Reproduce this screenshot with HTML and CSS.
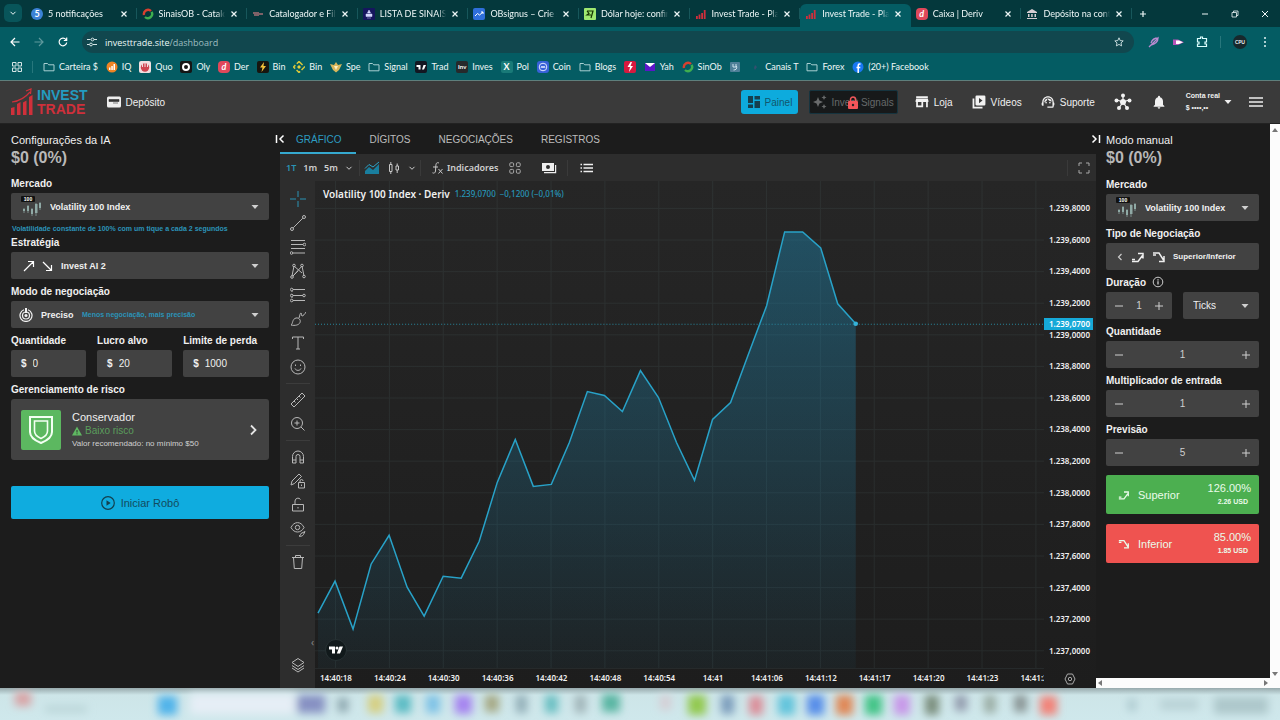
FILE: index.html
```html
<!DOCTYPE html>
<html lang="pt-BR">
<head>
<meta charset="utf-8">
<meta name="viewport" content="width=device-width, initial-scale=1">
<title>Invest Trade - Plataforma</title>
<link rel="stylesheet" href="styles.css">
</head>
<body>
<svg class="defs" aria-hidden="true">
  <symbol id="close" viewBox="0 0 8 8"><path d="M1.500 1.500l5 5m0-5l-5 5" fill="none" stroke="currentColor" stroke-width="1.200"/></symbol>
  <symbol id="folder" viewBox="0 0 12 12"><path d="M1 2.500h3.500l1.200 1.300h5.300v6h-10z" fill="none" stroke="#a9cfd2"/></symbol>
  <symbol id="bars" viewBox="0 0 12 12"><path d="M1 11V8h1.800v3zM3.600 11V6.500h1.800V11zM6.200 11V5H8v6zM8.800 11V2h1.800v9z" fill="#cf2f3c"/></symbol>
  <symbol id="caret" viewBox="0 0 8 8"><path d="M0.500 2h7L4 6z" fill="currentColor"/></symbol>
  <symbol id="chev" viewBox="0 0 8 8"><path d="M1.500 2.800L4 5.300l2.500-2.500" fill="none" stroke="currentColor"/></symbol>
  <symbol id="ring" viewBox="0 0 12 12"><g fill="none" stroke-width="2.400"><path d="M2 7a4.200 4.200 0 0 1 7-4" stroke="#d8402f"/><path d="M9.500 3.800A4.200 4.200 0 0 1 3 9" stroke="#3fae4f"/></g></symbol>
  <symbol id="minus" viewBox="0 0 10 10"><path d="M1 5h8" stroke="currentColor" fill="none"/></symbol>
  <symbol id="plus" viewBox="0 0 10 10"><path d="M1 5h8M5 1v8" stroke="currentColor" fill="none"/></symbol>
  <symbol id="up" viewBox="0 0 14 14"><path d="M1 11.500h6l4.500-6M1 9.500h3M7 3.500h5v5" fill="none" stroke="currentColor" stroke-width="1.500"/></symbol>
  <symbol id="down" viewBox="0 0 14 14"><path d="M1 3h6l4.500 7M1 5h3M12 6v5.500H7" fill="none" stroke="currentColor" stroke-width="1.500"/></symbol>
  <symbol id="market" viewBox="0 0 22 22">
    <rect width="14" height="6" rx="1" fill="#111"/>
    <path d="M3 12v5M7 9v8M11 12v8M15 7v13M19 6v8" stroke="#8ba19e" stroke-width="0.800"/>
    <path d="M2 13h2v2H2zM6 10h2v5H6zM10 13h2v5h-2zM14 8h2.500v9H14zM18 7h2v5h-2z" fill="#8fa9a5"/>
    <text x="7" y="5" text-anchor="middle" class="market-num">100</text>
  </symbol>
</svg>

<header class="browser">
  <div class="tabstrip">
    <button class="tab-search" aria-label="Pesquisar guias"><svg class="i8"><use href="#chev"/></svg></button>
    <nav class="tabs" aria-label="Guias">
      <div class="tab"><span class="fav round blue">5</span><span class="tab-title">5 notificações</span><button aria-label="Fechar"><svg class="i8"><use href="#close"/></svg></button></div>
      <div class="tab"><svg class="i12"><use href="#ring"/></svg><span class="tab-title">SinaisOB - Catalogador</span><button aria-label="Fechar"><svg class="i8"><use href="#close"/></svg></button></div>
      <div class="tab"><svg class="i12" viewBox="0 0 12 12"><path d="M1 5h4M2 7h3M6 4v4M7 6h4" stroke="#a76f75" stroke-width="1.500"/></svg><span class="tab-title">Catalogador e Filtro de</span><button aria-label="Fechar"><svg class="i8"><use href="#close"/></svg></button></div>
      <div class="tab"><svg class="i12" viewBox="0 0 12 12"><rect width="12" height="12" rx="1" fill="#15165e"/><path d="M3 6h6v2.500H3zM4 10h4M6 2l1.500 3h-3z" fill="#d5d8ff" stroke="#d5d8ff" stroke-width="0.500"/></svg><span class="tab-title">LISTA DE SINAIS FREE</span><button aria-label="Fechar"><svg class="i8"><use href="#close"/></svg></button></div>
      <div class="tab"><svg class="i12" viewBox="0 0 12 12"><rect width="12" height="12" rx="2" fill="#2f6fdb"/><path d="M2 8l2.500-2.500 2 1.500L10 4M8 4h2v2" fill="none" stroke="#fff"/></svg><span class="tab-title">OBsignus – Crie sinais</span><button aria-label="Fechar"><svg class="i8"><use href="#close"/></svg></button></div>
      <div class="tab"><svg class="i12" viewBox="0 0 12 12"><rect width="12" height="12" rx="1" fill="#9fe870"/><path d="M3 3h6L7 10M3 3l2 2.500L3 7h4" fill="none" stroke="#163300" stroke-width="1.200"/></svg><span class="tab-title">Dólar hoje: confira a</span><button aria-label="Fechar"><svg class="i8"><use href="#close"/></svg></button></div>
      <div class="tab"><svg class="i12"><use href="#bars"/></svg><span class="tab-title">Invest Trade - Plataforma</span><button aria-label="Fechar"><svg class="i8"><use href="#close"/></svg></button></div>
      <div class="tab active"><svg class="i12"><use href="#bars"/></svg><span class="tab-title">Invest Trade - Plataforma</span><button aria-label="Fechar"><svg class="i8"><use href="#close"/></svg></button></div>
      <div class="tab"><span class="fav deriv">d</span><span class="tab-title">Caixa | Deriv</span><button aria-label="Fechar"><svg class="i8"><use href="#close"/></svg></button></div>
      <div class="tab"><svg class="i12" viewBox="0 0 12 12"><path d="M1 4l5-3 5 3v1H1zM2 6h1.500v3H2zM5.200 6h1.500v3H5.200zM8.500 6H10v3H8.500zM1 10h10v1H1z" fill="#d6cdd2"/></svg><span class="tab-title">Depósito na conta real</span><button aria-label="Fechar"><svg class="i8"><use href="#close"/></svg></button></div>
    </nav>
    <div class="window">
      <button aria-label="Nova guia"><svg class="i8" viewBox="0 0 8 8"><path d="M1 4h6M4 1v6" stroke="currentColor" stroke-width="1.200"/></svg></button>
      <span class="window-controls">
        <button aria-label="Minimizar"><svg class="i8" viewBox="0 0 8 8"><path d="M1 4h6" stroke="currentColor"/></svg></button>
        <button aria-label="Restaurar"><svg class="i8" viewBox="0 0 8 8"><path d="M1 2.500h4.500V7H1zM2.500 2.500V1H7v4.500H5.500" fill="none" stroke="currentColor" stroke-width="0.800"/></svg></button>
        <button aria-label="Fechar janela"><svg class="i8" viewBox="0 0 8 8"><path d="M1 1l6 6m0-6L1 7" stroke="currentColor"/></svg></button>
      </span>
    </div>
  </div>

  <div class="address-row">
    <button aria-label="Voltar"><svg class="i10" viewBox="0 0 10 10"><path d="M9.500 5H1M5 1L1 5l4 4" fill="none" stroke="#fff" stroke-width="1.200"/></svg></button>
    <button aria-label="Avançar"><svg class="i10" viewBox="0 0 10 10"><path d="M.5 5H9M5 1l4 4-4 4" fill="none" stroke="#5f999d" stroke-width="1.200"/></svg></button>
    <button aria-label="Recarregar"><svg class="i10" viewBox="0 0 10 10"><path d="M8.700 5.500A3.800 3.800 0 1 1 8 2.700M8.700.5v3H5.800" fill="none" stroke="#fff" stroke-width="1.200"/></svg></button>
    <div class="address">
      <svg class="i10" viewBox="0 0 10 10"><path d="M0 2.500h3.500M7 2.500h3M0 7.500h2.500M6 7.500h4" stroke="#d5e5e6"/><circle cx="5.500" cy="2.500" r="1.400" fill="none" stroke="#d5e5e6"/><circle cx="4" cy="7.500" r="1.400" fill="none" stroke="#d5e5e6"/></svg>
      <span class="url">investtrade.site<span class="path">/dashboard</span></span>
      <button class="star" aria-label="Favoritar"><svg class="i10" viewBox="0 0 10 10"><path d="M5 .8l1.200 2.800 3 .3L7 5.900l.6 3L5 7.400 2.400 8.900l.6-3L.8 3.900l3-.3z" fill="none" stroke="#d5e5e6" stroke-width="0.900"/></svg></button>
    </div>
    <div class="extensions">
      <svg class="i12" viewBox="0 0 12 12"><path d="M1 11L10 2c0 4-3 6-7 7M3 7c1-3 4-5 7-5" fill="none" stroke="#b98ad0" stroke-width="1.300"/></svg>
      <svg class="i12" viewBox="0 0 12 12"><path d="M1 3.500h5l6 2.700-6 2.700H1z" fill="#b554b8"/><path d="M4 4.500h3l4 1.700-4 1.700H4z" fill="#fff"/></svg>
      <svg class="i12" viewBox="0 0 12 12"><path d="M1.500 2.500h3V1h2v1.500h4V6H9v2h1.500v2.500h-9V8H3V6H1.500z" fill="none" stroke="#dff" stroke-width="1.200"/></svg>
      <span class="rule"></span>
      <span class="avatar">CPU</span>
      <svg class="i12" viewBox="0 0 12 12"><g fill="#e5f5f5"><circle cx="6" cy="2" r="1"/><circle cx="6" cy="6" r="1"/><circle cx="6" cy="10" r="1"/></g></svg>
    </div>
  </div>

  <div class="bookmarks-row">
    <svg class="i10" viewBox="0 0 10 10"><path d="M.5.500h3.500V4H.5zM6 .5h3.500V4H6zM.5 6h3.500v3.500H.5zM6 6h3.500v3.500H6z" fill="none" stroke="#d5e5e6"/></svg>
    <span class="rule"></span>
    <nav class="bookmarks" aria-label="Favoritos">
      <a href="#"><svg class="i12"><use href="#folder"/></svg>Carteira $</a>
      <a href="#"><svg class="i12" viewBox="0 0 12 12"><circle cx="6" cy="6" r="5.500" fill="#ef8424"/><path d="M3 9V6.500h1.500V9zM5.300 9V5h1.500v4zM7.500 9V3H9v6z" fill="#fff"/></svg>IQ</a>
      <a href="#"><svg class="i12" viewBox="0 0 12 12"><rect width="12" height="12" rx="2" fill="#f1dfe0"/><circle cx="6" cy="6.500" r="4.200" fill="#cf4550"/><path d="M6 1v5M3.500 3v3M8.500 3v3" stroke="#f1dfe0"/></svg>Quo</a>
      <a href="#"><svg class="i12" viewBox="0 0 12 12"><rect width="12" height="12" rx="2" fill="#151515"/><circle cx="6" cy="6" r="3" fill="none" stroke="#fff" stroke-width="2"/></svg>Oly</a>
      <a href="#"><span class="fav deriv">d</span>Der</a>
      <a href="#"><svg class="i12" viewBox="0 0 12 12"><rect width="12" height="12" rx="2" fill="#17150f"/><path d="M7 1L3 6.500h2.500L4.500 11 9 5H6.500z" fill="#f3c23a"/></svg>Bin</a>
      <a href="#"><svg class="i12" viewBox="0 0 12 12"><path d="M6 .5L11.500 6 6 11.500.5 6z" fill="none" stroke="#d9c83a" stroke-width="1.500" stroke-dasharray="5 2"/><path d="M6 4l2 2-2 2-2-2z" fill="#e5cf3b"/></svg>Bin</a>
      <a href="#"><svg class="i12" viewBox="0 0 12 12"><path d="M0 3l4 1 2-3 2 3 4-1-3 6-3 2.500L3 9z" fill="#d8b75c"/><path d="M4 5h4L6 9z" fill="#fff0c0"/></svg>Spe</a>
      <a href="#"><svg class="i12"><use href="#folder"/></svg>Signal</a>
      <a href="#"><svg class="i12" viewBox="0 0 12 12"><rect width="12" height="12" rx="2" fill="#131722"/><path d="M1.500 4h4v4.500h-2V6h-2zM8.500 4H11L9 8.500H7z" fill="#fff"/></svg>Trad</a>
      <a href="#"><span class="fav inv">Inv</span>Inves</a>
      <a href="#"><span class="fav pol">X</span>Pol</a>
      <a href="#"><svg class="i12" viewBox="0 0 12 12"><rect width="12" height="12" rx="3" fill="#3761d8"/><circle cx="6" cy="6" r="3.800" fill="none" stroke="#dfe6ff"/><path d="M4 7l1-2 1 2 1-2 1 2" fill="none" stroke="#dfe6ff"/></svg>Coin</a>
      <a href="#"><svg class="i12"><use href="#folder"/></svg>Blogs</a>
      <a href="#" aria-label="Notícias"><svg class="i12" viewBox="0 0 12 12"><rect width="12" height="12" rx="2" fill="#d7193f"/><path d="M6.500 1L3.500 6H6l-1 5 4-6H6.500L8 1z" fill="#fff"/></svg></a>
      <a href="#"><svg class="i12" viewBox="0 0 12 12"><path d="M1 2h10v8H1z" fill="#5a16c9"/><path d="M1 2h10L6 6z" fill="#fff"/></svg>Yah</a>
      <a href="#"><svg class="i12"><use href="#ring"/></svg>SinOb</a>
      <a href="#" aria-label="Favorito"><svg class="i12" viewBox="0 0 12 12"><rect x="1" y="1" width="10" height="10" rx="1" fill="#4e7f98"/><path d="M4 3v3h3V3M7.500 5c1 3-1 4-3 4" fill="none" stroke="#cfe4ee"/></svg></a>
      <a href="#"><svg class="i12" viewBox="0 0 12 12"><path d="M6 4l2 2-2 3-1-2z" fill="#34506f"/></svg>Canais T</a>
      <a href="#"><svg class="i12"><use href="#folder"/></svg>Forex</a>
      <a href="#"><svg class="i12" viewBox="0 0 12 12"><circle cx="6" cy="6" r="5.500" fill="#1877f2"/><path d="M8.500 3H7.500C6.500 3 6.200 3.600 6.200 4.500V12M4.500 6.500h3.800" fill="none" stroke="#fff" stroke-width="1.500"/></svg>(20+) Facebook</a>
    </nav>
  </div>
</header>

<div class="app-header">
  <a class="logo" href="#" aria-label="Invest Trade">
    <svg viewBox="0 0 24 28"><path d="M1 27v-7l3.500-1v8zM7 27V16l3.500-2v13zM13 27V14.500l3.500-2V27zM19 27V9l3.500-2v20z" fill="#d0303a"/><path d="M2 14c8-1 13-4 18-10M16 3l5-2-.5 5" fill="none" stroke="#d0303a" stroke-width="1.200"/></svg>
    <span class="logo-text"><span class="logo-top">INVEST</span><span class="logo-bottom">TRADE</span></span>
  </a>
  <a class="nav-item deposit" href="#"><svg class="i14" viewBox="0 0 14 14"><rect y="1.500" width="14" height="11" rx="1.500" fill="#eee"/><path d="M2 4.500h10v2H2zM6 8h5" fill="#333" stroke="#333" stroke-width="0.600"/></svg>Depósito</a>
  <div class="nav">
    <button class="btn-panel"><svg class="i14" viewBox="0 0 14 14"><path d="M1 1h5v7H1zM1 9.500h5V13H1zM7.500 1H13v3.500H7.500zM7.500 6H13v7H7.500z" fill="#15404e"/></svg>Painel</button>
    <button class="btn-signals" disabled><svg class="i14" viewBox="0 0 14 14"><path d="M5 2l1.400 3.600L10 7 6.400 8.400 5 12 3.600 8.400 0 7l3.600-1.400zM11 0l.8 1.700 1.700.8-1.700.8L11 5l-.8-1.700-1.700-.8 1.700-.8zM11 9l.8 1.700 1.700.8-1.700.8L11 14l-.8-1.700-1.700-.8 1.700-.8z" fill="#696b6c"/></svg><span>Invest Signals</span>
      <svg class="lock" viewBox="0 0 10 13"><rect y="5" width="10" height="8" rx="1" fill="#f2565a"/><path d="M2.500 5V3.500a2.500 2.500 0 0 1 5 0V5" fill="none" stroke="#f2565a" stroke-width="1.500"/><circle cx="5" cy="9" r="1.200" fill="#222"/></svg></button>
    <a class="nav-item" href="#"><svg class="i14" viewBox="0 0 24 24"><path d="M22 2H2v3h20V2zm1 10v-2l-1-4H2l-1 4v2h1v9h12v-9h5v9h3v-9h1zM11 18H5v-6h6v6z" fill="#f2f2f2"/></svg>Loja</a>
    <a class="nav-item" href="#"><svg class="i14" viewBox="0 0 24 24"><path d="M4 6H1v17h17v-3H4V6zm16-5H8a2 2 0 0 0-2 2v13c0 1 .9 2 2 2h13a2 2 0 0 0 2-2V3a2 2 0 0 0-2-2zM12 14V5l6 4.500z" fill="#f2f2f2"/></svg>Vídeos</a>
    <a class="nav-item" href="#"><svg class="i14" viewBox="1 1 22 22"><path d="M21 12.200C21 6.700 16.700 3 12 3S3 6.600 3 12.300c-.6.300-1 1-1 1.700v2c0 1.100.9 2 2 2h1v-6a7 7 0 0 1 14 0v7h-8v2h8a2 2 0 0 0 2-2v-1.200c.6-.3 1-.9 1-1.600v-2.300c0-.8-.4-1.400-1-1.700z" fill="#f2f2f2"/><path d="M6 12.700c.1-4 3-6.200 6-6.200 3 0 5.500 2 6 4.700-3 0-5.600-1.600-7-4.200-.4 2.500-2 4.700-5 5.700z" fill="#f2f2f2"/><circle cx="9" cy="13" r="1.200" fill="#f2f2f2"/><circle cx="15" cy="13" r="1.200" fill="#f2f2f2"/></svg>Suporte</a>
    <button aria-label="Rede"><svg class="i18" viewBox="0 0 18 18"><path d="M9 9V3M9 9L3 7M9 9l6-2M9 9l-4 6M9 9l4 6" stroke="#f2f2f2" stroke-width="1.300"/><g fill="#f2f2f2"><circle cx="9" cy="9" r="3"/><circle cx="9" cy="2.500" r="2"/><circle cx="2.500" cy="7.500" r="2"/><circle cx="15.500" cy="7.500" r="2"/><circle cx="5" cy="15" r="2"/><circle cx="13" cy="15" r="2"/></g></svg></button>
    <button aria-label="Notificações"><svg class="i16" viewBox="0 0 24 24"><path d="M12 22a2 2 0 0 0 2-2h-4c0 1.100.9 2 2 2zm6-6v-5c0-3.100-1.600-5.600-4.500-6.300V4a1.500 1.500 0 0 0-3 0v.7C7.600 5.400 6 7.900 6 11v5l-2 2v1h16v-1l-2-2z" fill="#f2f2f2"/></svg></button>
    <button class="account"><span><b>Conta real</b><b>$ ••••,••</b></span><svg class="i8"><use href="#caret"/></svg></button>
    <button aria-label="Menu"><svg class="i14" viewBox="0 0 14 14"><path d="M0 3h14M0 7h14M0 11h14" stroke="#eee" stroke-width="1.400"/></svg></button>
  </div>
</div>

<main class="workspace">
  <form class="panel panel-left">
    <div class="panel-head"><h2>Configurações da IA</h2><p class="balance">$0 (0%)</p></div>
    <div class="field"><label for="mercado">Mercado</label>
      <div class="control"><svg class="i22"><use href="#market"/></svg><select id="mercado"><option>Volatility 100 Index</option></select><svg class="i8 end"><use href="#caret"/></svg></div>
      <p class="hint">Volatilidade constante de 100% com um tique a cada 2 segundos</p></div>
    <div class="field"><label for="estrategia">Estratégia</label>
      <div class="control strategy"><svg class="arrows" viewBox="0 0 30 12"><path d="M1 11l9-9M5 1.500h5.500V7M20 2l8 8M23 10.500h5.500V5" fill="none" stroke="#fff" stroke-width="1.200"/></svg><select id="estrategia"><option>Invest AI 2</option></select><svg class="i8 end"><use href="#caret"/></svg></div></div>
    <div class="field"><label for="modo">Modo de negociação</label>
      <div class="control mode"><svg class="i14" viewBox="0 0 14 14"><g fill="none" stroke="#f2f2f2" stroke-width="1.200"><path d="M9 1.800A6 6 0 1 1 5 1.800"/><circle cx="7" cy="7.500" r="3.500"/><path d="M7 0v5" stroke-width="2"/></g><circle cx="7" cy="7.500" r="1.500" fill="#f2f2f2"/></svg><select id="modo"><option>Preciso</option></select><span class="mode-hint">Menos negociação, mais precisão</span><svg class="i8 end"><use href="#caret"/></svg></div></div>
    <div class="triple">
      <div class="field"><label for="qtd">Quantidade</label><div class="control money"><b>$</b><input id="qtd" value="0"></div></div>
      <div class="field"><label for="lucro">Lucro alvo</label><div class="control money"><b>$</b><input id="lucro" value="20"></div></div>
      <div class="field"><label for="perda">Limite de perda</label><div class="control money"><b>$</b><input id="perda" value="1000"></div></div>
    </div>
    <div class="field"><span class="label">Gerenciamento de risco</span>
      <button type="button" class="risk">
        <span class="shield"><svg viewBox="0 0 26 30"><path d="M2 2h22v15c0 6-6 9-11 11C8 26 2 23 2 17z" fill="none" stroke="#f3fff3" stroke-width="2"/><path d="M6.500 6h13v10c0 4-3 6-6.500 7.500C9.500 22 6.500 20 6.500 16z" fill="none" stroke="#f3fff3" stroke-width="1.600"/></svg></span>
        <span class="risk-text"><span class="risk-name">Conservador</span><span class="risk-level"><svg class="i10" viewBox="0 0 10 10"><path d="M5 .5L10 9.500H0z" fill="#5fb862"/><path d="M5 4v2.500M5 7.300v1" stroke="#333"/></svg>Baixo risco</span><span class="risk-note">Valor recomendado: no mínimo $50</span></span>
        <svg class="i12 end" viewBox="0 0 12 12"><path d="M4 1.500L8.500 6 4 10.500" fill="none" stroke="#e5e5e5" stroke-width="1.800"/></svg>
      </button></div>
    <button type="button" class="start"><svg class="i14" viewBox="0 0 14 14"><circle cx="7" cy="7" r="6.300" fill="none" stroke="#12404f" stroke-width="1.200"/><path d="M5.500 4.300v5.400L9.700 7z" fill="#12404f"/></svg>Iniciar Robô</button>
  </form>

  <section class="center">
    <div class="view-tabs">
      <button class="collapse" aria-label="Recolher painel"><svg class="i10" viewBox="0 0 10 10"><path d="M1.500 1v8M8.500 1.500L5 5l3.500 3.500" fill="none" stroke="#fff" stroke-width="1.500"/></svg></button>
      <button class="view-tab selected">GRÁFICO</button>
      <button class="view-tab">DÍGITOS</button>
      <button class="view-tab">NEGOCIAÇÕES</button>
      <button class="view-tab">REGISTROS</button>
    </div>
    <div class="chart-bar">
      <div class="group intervals"><button class="on">1T</button><button>1m</button><button>5m</button><button aria-label="Mais intervalos"><svg class="i8"><use href="#chev"/></svg></button></div>
      <div class="group types"><button aria-label="Área"><svg class="i16" viewBox="0 0 16 16"><path d="M1 14V11l4-4 4 3 6-6v10z" fill="#197e9e"/><path d="M1 8.500l4-4 4 2.500 6-5" fill="none" stroke="#2aa6cc"/></svg></button><button aria-label="Velas"><svg class="i12" viewBox="0 0 12 12"><path d="M1.500 2.500h2.500v7H1.500zM2.800 0v2.500M2.800 9.500V12M8 4h2.500v4H8zM9.200 1.500V4M9.200 8v3" fill="none" stroke="#c8c8c8"/></svg></button><button aria-label="Mais tipos"><svg class="i8"><use href="#chev"/></svg></button></div>
      <div class="group studies"><button><svg class="i12" viewBox="0 0 12 12"><path d="M8 1C5.500 0 5 1.500 4.800 4L4.500 9c-.2 2-1.500 2.500-3 1.800M2 5h5M7.500 7l4 4.500m0-4.500l-4 4.500" fill="none" stroke="#c8c8c8"/></svg>Indicadores</button><button aria-label="Modelos"><svg class="i12" viewBox="0 0 12 12"><g fill="none" stroke="#aaa"><rect x="0.800" y="0.800" width="3.800" height="3.800" rx="1"/><rect x="7.400" y="0.800" width="3.800" height="3.800" rx="1"/><rect x="0.800" y="7.400" width="3.800" height="3.800" rx="1"/><rect x="7.400" y="7.400" width="3.800" height="3.800" rx="1"/></g></svg></button><button aria-label="Pagamentos"><svg class="i16" viewBox="0 0 16 16"><path d="M1 3h12v8H1zM14 5h1.200v8.200H3V12h11z" fill="#eee"/><circle cx="7" cy="7" r="2" fill="#2d2d2d"/></svg></button></div>
      <div class="group"><button aria-label="Lista"><svg class="i14" viewBox="0 0 14 14"><path d="M3.500 3.500H13M3.500 7H13M3.500 10.500H13M.5 3.500H2M.5 7H2M.5 10.500H2" stroke="#eee" stroke-width="1.400"/></svg></button></div>
      <div class="group full"><button aria-label="Tela cheia"><svg class="i12" viewBox="0 0 12 12"><path d="M1 4V1h3M8 1h3v3M11 8v3H8M4 11H1V8" fill="none" stroke="#aaa"/></svg></button></div>
    </div>
    <div class="chart-area">
      <div class="tools">
        <button aria-label="Cruz"><svg viewBox="0 0 16 16"><path d="M0 8h6M10 8h6M8 0v6M8 10v6" stroke="#2a93b5"/></svg></button>
        <button aria-label="Linha de tendência"><svg viewBox="0 0 16 16"><path d="M3.200 12.800l9.600-9.600"/><circle cx="2" cy="14" r="1.500"/><circle cx="14" cy="2" r="1.500"/></svg></button>
        <button aria-label="Fibonacci"><svg viewBox="0 0 16 16"><path d="M1 1.500h14M1 5.500h12M1 9.500h14M3 14h12"/><circle cx="14.500" cy="5.500" r="1.300"/><circle cx="1.500" cy="14" r="1.300"/></svg></button>
        <button aria-label="Padrões"><svg viewBox="0 0 16 16"><path d="M2 13L4 3l8 7M3 13l9-10 2 10M3 13l5-5"/><circle cx="4" cy="2.500" r="1.300"/><circle cx="12" cy="2.500" r="1.300"/><circle cx="2" cy="14" r="1.300"/><circle cx="14" cy="13.500" r="1.300"/></svg></button>
        <button aria-label="Previsão"><svg viewBox="0 0 16 16"><path d="M3 2.500h12M3 8.500h10M3 13.500h12" /><path d="M2 4v9" stroke-dasharray="1 2"/><circle cx="1.700" cy="2.500" r="1.300"/><circle cx="1.700" cy="8.500" r="1.300"/><circle cx="14" cy="8.500" r="1.300"/><circle cx="1.700" cy="13.500" r="1.300"/></svg></button>
        <button aria-label="Pincel"><svg viewBox="0 0 16 16"><path d="M1 14c2-1 1-6 5-7 3-.5 5 2 4 4.500C9 14 5 15 1 14zM9 7c1-3 1-5 2-5 1 0 0 3 1 3s3-2 4-4"/></svg></button>
        <button aria-label="Texto"><svg viewBox="0 0 16 16"><path d="M2.500 4V2h11v2M8 2v12M6 14h4"/></svg></button>
        <button aria-label="Emoji"><svg viewBox="0 0 16 16"><circle cx="8" cy="8" r="7"/><path d="M5 9.500c1 2.500 5 2.500 6 0M5.500 5.500v1.500M10.500 5.500v1.500"/></svg></button>
        <span class="divider"></span>
        <button aria-label="Régua"><svg viewBox="0 0 16 16"><path d="M1 12L12 1l3 3L4 15zM4 9l1.500 1.500M6.500 6.500L8 8M9 4l1.500 1.500"/></svg></button>
        <button aria-label="Ampliar"><svg viewBox="0 0 16 16"><circle cx="7" cy="7" r="5.500"/><path d="M11 11l3.500 3.500M4.500 7h5M7 4.500v5"/></svg></button>
        <span class="divider"></span>
        <button aria-label="Ímã"><svg viewBox="0 0 16 16"><path d="M2.500 14V7.500a5.500 5.500 0 0 1 11 0V14H10V7.500a2 2 0 0 0-4 0V14zM2.500 11H6M10 11h3.500"/></svg></button>
        <button aria-label="Manter desenho"><svg viewBox="0 0 16 16"><path d="M1 12l1-4 7-7 2.500 2.500-7 7zM8.500 9.500h6V15h-6zM10 9.500V8a1.500 1.500 0 0 1 3 0M11.500 11.500v1.500"/></svg></button>
        <button aria-label="Bloquear"><svg viewBox="0 0 16 16"><path d="M2.500 7.500h11V14h-11zM5 7.500V4a3 3 0 0 1 5.500-1.500M8 10v1.500"/></svg></button>
        <button aria-label="Ocultar"><svg viewBox="0 0 16 16"><path d="M1 6.500C4 0 11 0 14 6.500c-3 6-10 6-13 0z"/><circle cx="7.500" cy="6.500" r="2.200"/><path d="M9 15c2 0 1-3 3-3l3-1.500-1.500 3C12.500 15.500 10 15.500 9 15z"/></svg></button>
        <span class="divider"></span>
        <button aria-label="Excluir"><svg viewBox="0 0 16 16"><path d="M2 3.500h12M5.500 3.500V1.500h5v2M3.500 3.500l.8 11h7.400l.8-11"/></svg></button>
        <button class="layers" aria-label="Camadas"><svg viewBox="0 0 16 16"><path d="M8 1.500l6 4-6 4-6-4zM2 8.500l6 4 6-4M2 11l6 4 6-4"/></svg></button>
      </div>
      <div class="plot">
        <svg class="series" viewBox="315 181 728 488" preserveAspectRatio="none" role="img" aria-label="Gráfico de área do Volatility 100 Index">
          <defs>
            <linearGradient id="fill" x1="0" y1="232" x2="0" y2="669" gradientUnits="userSpaceOnUse"><stop offset="0" stop-color="#1c8fbd" stop-opacity="0.400"/><stop offset="1" stop-color="#1c8fbd" stop-opacity="0.050"/></linearGradient>
            <pattern id="grid" x="335" y="208" width="53.800" height="31.660" patternUnits="userSpaceOnUse"><path d="M0 .5h53.800M.5 0v31.660" stroke="#4d6363" stroke-opacity="0.180" fill="none"/></pattern>
          </defs>
          <rect x="315" y="181" width="728" height="488" fill="url(#grid)"/>
          <path d="M318 669V614L335 582 353 630 371 565 389 536 407 588 424 617 443 577 461 579 479 542 497 483 515 440 533 487 551 485 569 443 587 392 604 396 622 412 640 371 658 398 676 443 694 481 712 420 730 403 748 354 766 306 784 232H802L820 248 837 304 855 324V669Z" fill="url(#fill)"/>
          <path d="M318 614L335 582 353 630 371 565 389 536 407 588 424 617 443 577 461 579 479 542 497 483 515 440 533 487 551 485 569 443 587 392 604 396 622 412 640 371 658 398 676 443 694 481 712 420 730 403 748 354 766 306 784 232H802L820 248 837 304 855 324" fill="none" stroke="#28a2c8" stroke-width="1.500" vector-effect="non-scaling-stroke"/>
          <path d="M315 324.500H1043" stroke="#28899f" stroke-dasharray="1 2"/>
          <circle cx="855" cy="324" r="2.300" fill="#35b3d9"/>
        </svg>
        <div class="legend"><span class="symbol">Volatility 100 Index · Deriv</span><span class="quote">1.239,0700&ensp;−0,1200 (−0,01%)</span></div>
        <span class="tv"><svg class="i16" viewBox="0 0 16 16"><path d="M1 4.500h6v7H4V7.500H1zM11.500 4.500H15l-3 7H8.800z" fill="#fff"/><circle cx="9" cy="6" r="1.500" fill="#fff"/></svg></span>
        <button class="fold" aria-label="Recolher ferramentas">‹</button>
      </div>
      <div class="prices">
        <span>1.239,8000</span><span>1.239,6000</span><span>1.239,4000</span><span>1.239,2000</span><span>1.239,0000</span><span>1.238,8000</span><span>1.238,6000</span><span>1.238,4000</span><span>1.238,2000</span><span>1.238,0000</span><span>1.237,8000</span><span>1.237,6000</span><span>1.237,4000</span><span>1.237,2000</span><span>1.237,0000</span>
        <strong class="last-price">1.239,0700</strong>
      </div>
      <div class="times"><span>14:40:18</span><span>14:40:24</span><span>14:40:30</span><span>14:40:36</span><span>14:40:42</span><span>14:40:48</span><span>14:40:54</span><span>14:41</span><span>14:41:06</span><span>14:41:12</span><span>14:41:17</span><span>14:41:20</span><span>14:41:23</span><span>14:41:26</span></div>
      <button class="axis-settings" aria-label="Configurações do eixo"><svg class="i12" viewBox="0 0 12 12"><path d="M3.500 1h5L11 6l-2.500 5h-5L1 6z" fill="none" stroke="#aaa"/><circle cx="6" cy="6" r="1.700" fill="none" stroke="#aaa"/></svg></button>
    </div>
  </section>

  <div class="right-wrap">
    <form class="panel panel-right">
      <button type="button" class="expand" aria-label="Recolher painel manual"><svg class="i10" viewBox="0 0 10 10"><path d="M8.500 1v8M1.500 1.500L5 5 1.500 8.500" fill="none" stroke="#fff" stroke-width="1.500"/></svg></button>
      <div class="panel-head"><h2>Modo manual</h2><p class="balance">$0 (0%)</p></div>
      <div class="field"><label for="mercado2">Mercado</label><div class="control"><svg class="i22"><use href="#market"/></svg><select id="mercado2"><option>Volatility 100 Index</option></select><svg class="i8 end"><use href="#caret"/></svg></div></div>
      <div class="field"><span class="label">Tipo de Negociação</span><button type="button" class="control kind"><svg class="i8" viewBox="0 0 8 8"><path d="M5.500 1L2.500 4l3 3" fill="none" stroke="#ccc" stroke-width="1.200"/></svg><svg class="i14"><use href="#up"/></svg><svg class="i14"><use href="#down"/></svg><b>Superior/Inferior</b></button></div>
      <div class="field"><label for="duracao">Duração <svg class="i12" viewBox="0 0 12 12"><circle cx="6" cy="6" r="4.800" fill="none" stroke="#ccc"/><path d="M6 5.300v3.200M6 3.200v1.200" stroke="#ddd" stroke-width="1.200"/></svg></label>
        <div class="duration"><div class="control stepper"><button type="button" aria-label="Menos"><svg class="i10"><use href="#minus"/></svg></button><input id="duracao" value="1"><button type="button" aria-label="Mais"><svg class="i10"><use href="#plus"/></svg></button></div>
        <div class="control unit"><select aria-label="Unidade"><option>Ticks</option></select><svg class="i8 end"><use href="#caret"/></svg></div></div></div>
      <div class="field"><label for="qtd2">Quantidade</label><div class="control stepper"><button type="button" aria-label="Menos"><svg class="i10"><use href="#minus"/></svg></button><input id="qtd2" value="1"><button type="button" aria-label="Mais"><svg class="i10"><use href="#plus"/></svg></button></div></div>
      <div class="field"><label for="mult">Multiplicador de entrada</label><div class="control stepper"><button type="button" aria-label="Menos"><svg class="i10"><use href="#minus"/></svg></button><input id="mult" value="1"><button type="button" aria-label="Mais"><svg class="i10"><use href="#plus"/></svg></button></div></div>
      <div class="field"><label for="prev">Previsão</label><div class="control stepper"><button type="button" aria-label="Menos"><svg class="i10"><use href="#minus"/></svg></button><input id="prev" value="5"><button type="button" aria-label="Mais"><svg class="i10"><use href="#plus"/></svg></button></div></div>
      <div class="trades">
        <button type="button" class="trade rise"><svg class="i12"><use href="#up"/></svg><span>Superior</span><span class="payout">126.00%<b>2.26 USD</b></span></button>
        <button type="button" class="trade fall"><svg class="i12"><use href="#down"/></svg><span>Inferior</span><span class="payout">85.00%<b>1.85 USD</b></span></button>
      </div>
    </form>
    <div class="hscroll"><svg class="i8" viewBox="0 0 8 8"><path d="M6 1v6L2 4z" fill="#777"/></svg><svg class="i8" viewBox="0 0 8 8"><path d="M2 1v6l4-3z" fill="#777"/></svg></div>
  </div>
  <div class="vscroll"><svg class="i8" viewBox="0 0 8 8"><path d="M1 6h6L4 2z" fill="#777"/></svg><svg class="i8" viewBox="0 0 8 8"><path d="M1 2h6L4 6z" fill="#777"/></svg></div>
</main>

<footer class="taskbar">
  <svg viewBox="0 0 1280 32" preserveAspectRatio="none" aria-hidden="true">
    <defs><filter id="soft" x="-5%" y="-50%" width="110%" height="200%"><feGaussianBlur stdDeviation="4"/></filter></defs>
    <g filter="url(#soft)">
      <rect x="190" y="6" width="105" height="20" fill="#e6eef6"/>
      <rect x="15" y="4" width="16" height="14" fill="#d9a3a5"/><rect x="45" y="18" width="42" height="6" fill="#b7d3d5"/>
      <rect x="158" y="8" width="19" height="19" fill="#4fb3ea"/>
      <rect x="297" y="7" width="28" height="18" fill="#8690c2"/><rect x="338" y="10" width="10" height="14" fill="#8ba5ad"/>
      <rect x="368" y="7" width="15" height="18" fill="#d6cf81"/><rect x="395" y="7" width="16" height="18" fill="#5bbcc4"/>
      <rect x="426" y="7" width="14" height="18" fill="#7ec2e6"/><rect x="455" y="7" width="17" height="19" fill="#a583f0"/>
      <rect x="485" y="7" width="14" height="17" fill="#a6a984"/><rect x="516" y="7" width="11" height="18" fill="#92aeb8"/>
      <rect x="545" y="7" width="13" height="18" fill="#69bfc2"/><rect x="575" y="7" width="11" height="18" fill="#a0b4b8"/>
      <rect x="602" y="6" width="18" height="18" fill="#5ab6a3"/><rect x="660" y="7" width="11" height="15" fill="#d5cdd4"/>
      <rect x="688" y="7" width="18" height="20" fill="#93c950"/><rect x="721" y="7" width="13" height="19" fill="#7c9cbc"/>
      <rect x="749" y="8" width="14" height="19" fill="#dc8e99"/><rect x="778" y="7" width="17" height="20" fill="#62c4dc"/>
      <rect x="807" y="7" width="17" height="20" fill="#568de9"/><rect x="836" y="7" width="17" height="20" fill="#e08857"/>
      <rect x="865" y="7" width="17" height="20" fill="#43c487"/><rect x="894" y="7" width="16" height="20" fill="#c898e9"/>
      <rect x="925" y="7" width="14" height="20" fill="#7c8f7e"/><rect x="955" y="7" width="12" height="16" fill="#939bad"/>
      <rect x="984" y="7" width="12" height="18" fill="#9baea6"/><rect x="1014" y="7" width="13" height="17" fill="#8a9595"/>
      <rect x="1040" y="8" width="17" height="19" fill="#f28278"/>
      <rect x="1128" y="11" width="8" height="12" fill="#abc8cd"/><rect x="1160" y="11" width="38" height="11" fill="#b9d2d6"/><rect x="1214" y="9" width="54" height="17" fill="#adc7cb"/>
    </g>
  </svg>
</footer>
</body>
</html>
```
FILE: styles.css
```css
* { box-sizing: border-box; }
body {
  margin: 0;
  min-height: 100vh;
  display: flex;
  flex-direction: column;
  background: #1c1c1c;
  color: #f0f0f0;
  font-family: "Liberation Sans", Arial, sans-serif;
  font-size: 10px;
}
button, input, select {
  font: inherit;
  color: inherit;
  background: none;
  border: 0;
  padding: 0;
  margin: 0;
  min-width: 0;
}
a { color: inherit; text-decoration: none; }
h2, p { margin: 0; }
svg { display: block; flex: none; }
select { appearance: none; font-weight: bold; }
button { display: flex; align-items: center; justify-content: center; }
.defs { position: absolute; width: 0; height: 0; }
.i8 { width: 8px; height: 8px; }
.i10 { width: 10px; height: 10px; }
.i12 { width: 12px; height: 12px; }
.i14 { width: 14px; height: 14px; }
.i16 { width: 16px; height: 16px; }
.i18 { width: 18px; height: 18px; }
.i22 { width: 22px; height: 22px; }
.end { margin-left: auto; }
.market-num { font: bold 5px "Liberation Sans", sans-serif; fill: #fff; }

/* Browser chrome */
.browser {
  background: #045c63;
  border-bottom: 1px solid #5f7f7c;
  font-family: Lato, "Open Sans", "Noto Sans", sans-serif;
  font-size: 9px;
  color: #eef7f7;
}
.tabstrip { display: flex; height: 27px; background: #04383c; }
.tab-search { width: 18px; height: 18px; margin: 4px; border-radius: 5px; background: #08555a; }
.tabs { flex: 1; min-width: 0; display: grid; grid-template-columns: repeat(10, minmax(0, 1fr)); }
.tab { display: flex; align-items: center; gap: 5px; padding: 0 9px 0 5px; position: relative; }
.tab::after { content: ""; position: absolute; right: 0; top: 8px; width: 1px; height: 11px; background: #17575b; }
.tab.active { background: #045c63; border-radius: 6px 6px 0 0; margin-top: 4px; padding-bottom: 4px; }
.tab.active::after { display: none; }
.tab-title {
  flex: 1;
  overflow: hidden;
  white-space: nowrap;
  mask-image: linear-gradient(to right, #000 88%, transparent);
}
.fav {
  flex: none;
  display: inline-block;
  width: 12px;
  height: 12px;
  line-height: 12px;
  text-align: center;
  font-weight: bold;
  border-radius: 2px;
  color: #fff;
}
.round { border-radius: 50%; }
.blue { background: #3b82d6; }
.deriv { background: #e0485a; border-radius: 4px; font-style: italic; }
.inv { background: #26292b; font-size: 6px; }
.pol { background: #197a78; }
.window { width: 148px; display: flex; align-items: center; justify-content: space-between; padding: 0 11px 0 7px; }
.window-controls { display: flex; gap: 22px; }

.address-row { display: flex; align-items: center; height: 30px; padding-left: 10px; gap: 14px; }
.address {
  flex: 1;
  display: flex;
  align-items: center;
  gap: 8px;
  height: 22px;
  padding: 0 10px 0 5px;
  border-radius: 11px;
  background: #11474e;
  font-family: "Open Sans", "Noto Sans", sans-serif;
  font-size: 9px;
}
.path { color: #9fbec1; }
.star { margin-left: auto; }
.extensions { display: flex; align-items: center; gap: 12px; padding-right: 9px; }
.rule { width: 1px; height: 12px; background: #27777c; }
.avatar { width: 14px; height: 14px; line-height: 14px; border-radius: 50%; background: #17282c; font-size: 5px; font-weight: bold; text-align: center; }
.bookmarks-row { display: flex; align-items: center; height: 23px; padding: 0 12px 4px; gap: 10px; }
.bookmarks { flex: 0 1 886px; display: flex; justify-content: space-between; }
.bookmarks a { display: flex; align-items: center; gap: 4px; white-space: nowrap; }

/* App header */
.app-header { display: flex; align-items: center; height: 42px; padding: 0 17px 0 10px; background: #3a3a3a; }
.logo { display: flex; align-items: center; gap: 3px; font-weight: bold; font-size: 14px; line-height: 14px; }
.logo svg { width: 24px; height: 28px; }
.logo-text { display: flex; flex-direction: column; }
.logo-top { color: #239cc0; }
.logo-bottom { color: #cf303b; }
.nav-item { display: flex; align-items: center; gap: 5px; }
.deposit { margin-left: 19px; }
.nav { margin-left: auto; display: flex; align-items: center; gap: 19px; }
.btn-panel { height: 24px; padding: 0 6px; gap: 4px; border-radius: 3px; background: #0dabdd; color: #12566c; margin-right: -8px; }
.btn-signals { position: relative; height: 24px; padding: 0 3px; gap: 4px; border: 1px solid #16343f; border-radius: 2px; background: #17191a; color: #66696a; margin-right: -2px; }
.lock { position: absolute; left: 38px; top: 5px; width: 10px; height: 13px; }
.account { gap: 4px; margin-right: -2px; font-size: 7px; line-height: 12px; text-align: left; }
.account b { display: block; white-space: nowrap; }

/* Workspace */
.workspace { flex: 1; display: grid; grid-template-columns: 280px minmax(0, 1fr) 174px 10px; border-top: 1px solid #222; }
.panel { padding: 9px 11px; }
.panel-head { padding-bottom: 7px; }
.panel-head h2 { font-size: 11px; font-weight: normal; line-height: 14px; }
.balance { font-size: 16px; font-weight: bold; line-height: 22px; color: #b8b8b8; }
.field { display: flex; flex-direction: column; gap: 3px; margin-bottom: 5px; }
.field label, .field .label { display: flex; align-items: center; gap: 6px; height: 14px; font-weight: bold; white-space: nowrap; }
.control { display: flex; align-items: center; height: 27px; padding: 0 10px; gap: 7px; border-radius: 2px; background: #424242; font-size: 9px; }
.control select { flex: 0 1 auto; }
.control .i8 { color: #d0d0d0; }
.hint { font-size: 7px; font-weight: bold; line-height: 12px; margin-bottom: -5px; padding-left: 1px; color: #2b93b8; white-space: nowrap; }
.strategy { padding-left: 12px; }
.arrows { width: 30px; height: 12px; }
.strategy, .mode { gap: 8px; }
.mode { padding-left: 8px; }
.mode-hint { font-size: 7px; font-weight: bold; color: #2b93b8; white-space: nowrap; }
.triple { display: grid; grid-template-columns: minmax(0, 7fr) minmax(0, 7fr) minmax(0, 8fr); gap: 11px; }
.money { gap: 6px; font-size: 10px; }
.money input { width: 100%; }
.risk { justify-content: flex-start; height: 61px; padding: 0 10px; gap: 11px; border-radius: 3px; background: #424242; text-align: left; }
.shield { display: flex; align-items: center; justify-content: center; width: 40px; height: 40px; border-radius: 2px; background: #5cb860; }
.shield svg { width: 26px; height: 30px; }
.risk-text { display: flex; flex-direction: column; font-size: 11px; line-height: 14px; }
.risk-level { display: flex; align-items: center; gap: 3px; font-size: 10px; color: #5a9d5c; }
.risk-note { font-size: 8px; line-height: 12px; color: #d0d0d0; }
.start { width: 100%; height: 33px; margin-top: 26px; gap: 6px; border-radius: 2px; background: #0facdf; color: #124b5e; font-size: 11px; }

/* Chart */
.center { display: flex; flex-direction: column; min-width: 0; }
.view-tabs { position: relative; display: flex; height: 30px; font-size: 10px; color: #bcbcbc; }
.view-tab { padding: 0 14px; }
.view-tab.selected { color: #2d9dc2; border-bottom: 2px solid #35a9cf; padding: 2px 14px 0 16px; }
.collapse { position: absolute; left: -5px; top: 10px; }
.chart-bar, .chart-area { font-family: "Noto Sans", "Open Sans", sans-serif; }
.chart-bar { display: flex; align-items: center; height: 27px; background: #2d2d2d; font-size: 9px; font-weight: 600; color: #cfcfcf; }
.group { display: flex; align-items: center; height: 16px; padding: 0 8px; border-right: 1px solid #3a3a3a; }
.group button { gap: 4px; }
.intervals { gap: 7px; padding: 0 6px; }
.intervals .on { color: #2a93b5; }
.types { gap: 8px; padding: 0 4px; }
.studies { gap: 10px; padding: 0 10px; }
.studies button + button + button { margin-left: 10px; }
.group:nth-child(4) { border-right: 0; padding-left: 12px; }
.full { margin-left: auto; border-right: 0; border-left: 1px solid #3a3a3a; padding: 0 6px 0 10px; }
.chart-area { flex: 1; display: grid; grid-template-columns: 35px minmax(0, 1fr) 52px; grid-template-rows: minmax(0, 1fr) 19px; background: linear-gradient(#262626, #1d1d1d); }
.tools { grid-row: 1 / 3; display: flex; flex-direction: column; align-items: center; padding: 6px 0 11px; background: #2d2d2d; }
.tools button { width: 24px; height: 24px; }
.tools svg { width: 16px; height: 16px; fill: none; stroke: #b8b8b8; stroke-width: 1; }
.divider { width: 24px; height: 1px; margin: 4px 0; background: #3c3c3c; }
.layers { margin-top: auto; }
.plot { position: relative; border-bottom: 1px solid #262a2b; }
.series { position: absolute; width: 100%; height: 100%; }
.legend { position: absolute; left: 8px; top: 6px; display: flex; align-items: center; gap: 5px; line-height: 14px; white-space: nowrap; }
.symbol { font-size: 10px; font-weight: 600; }
.quote { font-size: 8px; font-weight: 500; color: #2797ba; }
.tv { position: absolute; left: 10px; bottom: 7px; display: flex; align-items: center; justify-content: center; width: 22px; height: 22px; border-radius: 50%; background: #11191b; border: 1px solid #273133; }
.fold { position: absolute; left: -4px; bottom: 20px; height: 12px; color: #888; font-size: 10px; }
.prices { position: relative; display: flex; flex-direction: column; justify-content: space-between; padding: 21px 6px 12px 0; font-size: 8px; line-height: 12px; font-weight: 600; text-align: right; }
.last-price { position: absolute; left: 0; right: 3px; top: 28%; padding-right: 3px; background: #16a9d8; font-weight: 600; color: #fff; }
.times { grid-column: 2; display: grid; grid-template-columns: repeat(14, 7.33%); margin-left: -6px; overflow: hidden; font-size: 8px; line-height: 18px; font-weight: 600; text-align: center; white-space: nowrap; }

/* Manual panel */
.right-wrap { display: flex; flex-direction: column; }
.panel-right { position: relative; flex: 1; padding-left: 10px; }
.panel-right .panel-head { padding-bottom: 8px; }
.expand { position: absolute; left: -5px; top: 10px; }
.kind { justify-content: flex-start; gap: 7px; }
.kind b { font-size: 8px; }
.duration { display: grid; grid-template-columns: 66px minmax(0, 1fr); gap: 11px; }
.stepper { padding: 0 8px; color: #cfcfcf; }
.stepper input { flex: 1; width: 20px; text-align: center; font-size: 10px; }
.unit select { font-weight: normal; font-size: 10px; }
.trades { display: flex; flex-direction: column; gap: 10px; padding-top: 4px; }
.trade { height: 39px; padding: 0 8px 0 12px; gap: 8px; border-radius: 2px; font-size: 11px; color: #eafbea; }
.rise { background: #4caf50; }
.fall { background: #ef5350; }
.payout { margin-left: auto; text-align: right; line-height: 14px; }
.payout b { display: block; font-size: 7px; padding-right: 3px; }
.hscroll { display: flex; justify-content: space-between; align-items: center; height: 10px; background: #fcfcfc; }
.vscroll { display: flex; flex-direction: column; justify-content: space-between; align-items: center; background: #fcfcfc; padding: 2px 0 10px; }

.taskbar { height: 32px; background: linear-gradient(#97a9ac, #cde5e8 7px, #cfe8ec); overflow: hidden; }
.taskbar svg { width: 100%; height: 100%; }
```
